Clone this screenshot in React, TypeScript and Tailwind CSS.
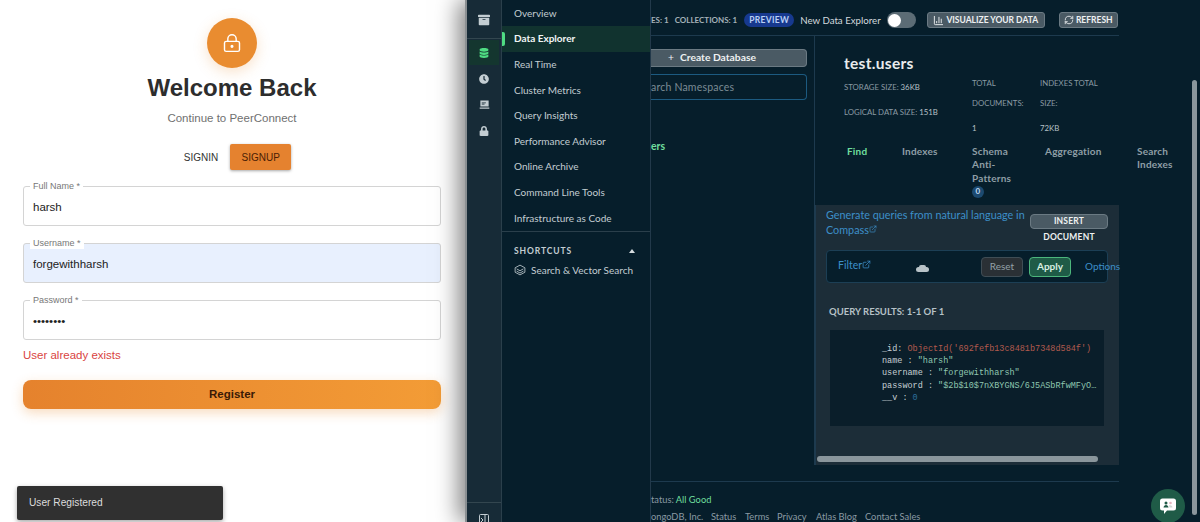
import { FaArchive, FaClock, FaDatabase, FaLock } from 'react-icons/fa';
import { BarChart3, ExternalLink, LockKeyhole, RefreshCw } from 'lucide-react';

const menuItems = [
  'Overview',
  'Data Explorer',
  'Real Time',
  'Cluster Metrics',
  'Query Insights',
  'Performance Advisor',
  'Online Archive',
  'Command Line Tools',
  'Infrastructure as Code',
];

function Field({
  label,
  value,
  filled = false,
}: {
  label: string;
  value: string;
  filled?: boolean;
}): React.ReactElement {
  return (
    <div
      className={`relative flex items-center h-[40px] px-[9px] pt-[3px] rounded-[3px] border border-[#d4d4d4] ${
        filled ? 'bg-[#e8f0fe]' : 'bg-white'
      }`}
    >
      <span className="absolute left-[6px] -top-[7px] px-[3px] bg-white text-[9px] leading-[12px] text-[#777]">
        {label} *
      </span>
      <span className="text-[11.5px] text-[#222]">{value}</span>
    </div>
  );
}

function LoginPanel(): React.ReactElement {
  return (
    <div className="flex flex-col w-[465px] h-[522px] shrink-0 bg-white pl-[23px] pr-[24px] pt-[18px] font-['Liberation_Sans',sans-serif]">
      <div className="flex flex-col items-center">
        <div className="flex items-center justify-center w-[50px] h-[50px] rounded-full bg-[#e98c30] shadow-[0_4px_14px_rgba(233,140,48,0.25)]">
          <LockKeyhole size={20} strokeWidth={1.7} className="text-white" />
        </div>
        <h1 className="mt-[5px] text-[24px] leading-[30px] font-bold text-[#2d2d2d]">Welcome Back</h1>
        <p className="mt-[7px] text-[11.5px] leading-[16px] text-[#707070]">Continue to PeerConnect</p>
        <div className="flex items-center mt-[18px] ml-[11px]">
          <span className="text-[10px] text-[#333] mr-[12px]">SIGNIN</span>
          <span className="flex items-center justify-center w-[61px] h-[26px] rounded-[2px] bg-[#e5822f] text-[10px] text-[#4a1d05] shadow-[0_1px_3px_rgba(0,0,0,0.35)]">
            SIGNUP
          </span>
        </div>
      </div>
      <div className="flex flex-col gap-[17px] mt-[16px]">
        <Field label="Full Name" value="harsh" />
        <Field label="Username" value="forgewithharsh" filled />
        <Field label="Password" value="••••••••" />
      </div>
      <p className="mt-[7px] text-[11.5px] leading-[16px] text-[#d9443f]">User already exists</p>
      <button className="mt-[17px] h-[29px] pt-px rounded-[8px] bg-gradient-to-r from-[#e5822d] to-[#f39c36] text-[11.5px] font-bold text-[#3a1a06] shadow-[0_4px_12px_rgba(233,140,48,0.3)]">
        Register
      </button>
      <div className="flex items-center ml-[-6px] mt-[77px] w-[206px] h-[34px] pl-[12px] rounded-[2px] bg-[#303030] text-[10.2px] text-[#ddd] shadow-[0_2px_5px_rgba(0,0,0,0.35)]">
        User Registered
      </div>
    </div>
  );
}

function Rail(): React.ReactElement {
  return (
    <div className="flex flex-col w-[35px] shrink-0 h-full bg-[#172b37] border-r border-[#2a3f4b]">
      <div className="flex items-center justify-center h-[39px] pt-[2px] border-b border-[#33464f] text-[#c3cdd2]">
        <FaArchive size={12} />
      </div>
      <div className="flex items-center justify-center mx-[2px] mt-[1px] h-[25px] bg-[#14362f] text-[#4fdc83]">
        <FaDatabase size={10} />
      </div>
      <div className="flex items-center justify-center h-[26px] mt-[1px] text-[#c3cdd2]">
        <FaClock size={10} />
      </div>
      <div className="flex items-center justify-center h-[25.5px] text-[#c3cdd2]">
        <svg width="11" height="11" viewBox="0 0 16 16" fill="currentColor">
          <path d="M2 2h12v9H2zM1 12.500h14V14H1zM4 5h6v1H4zM4 7h4v1H4z" fillRule="evenodd" />
        </svg>
      </div>
      <div className="flex items-center justify-center h-[26px] text-[#c3cdd2]">
        <FaLock size={10} />
      </div>
      <div className="mt-auto flex justify-center h-[20px] pt-[11px] border-t border-[#33464f] text-[#c3cdd2]">
        <svg width="10" height="12" viewBox="0 0 10 12" fill="none" stroke="currentColor" strokeWidth="1">
          <rect x="0.5" y="0.5" width="9" height="11" rx="1" />
          <path d="M6 1v10M2 4l2 2-2 2" />
        </svg>
      </div>
    </div>
  );
}

function SideMenu(): React.ReactElement {
  return (
    <div className="flex flex-col w-[149px] shrink-0 h-full bg-[#061e2b] border-r border-[#22394a] pt-[0.5px]">
      {menuItems.map((item) =>
        item === 'Data Explorer' ? (
          <div
            key={item}
            className="relative flex items-center h-[25.6px] pl-[12px] bg-[#11332f] text-[10px] font-bold text-[#f1f5f5]"
          >
            <span className="absolute left-0 top-[6px] w-[3px] h-[14px] rounded-r-[2px] bg-[#4fdc83]" />
            {item}
          </div>
        ) : (
          <div key={item} className="flex items-center h-[25.6px] pl-[12px] text-[10px] text-[#c3cdd2]">
            {item}
          </div>
        ),
      )}
      <div className="mt-[0.5px] border-t border-[#2a3f4b] pt-[13px] pl-[12px] pr-[15px]">
        <div className="flex items-center justify-between">
          <span className="text-[8.5px] leading-[12px] font-bold tracking-[0.9px] text-[#c3cdd2]">SHORTCUTS</span>
          <span className="w-0 h-0 border-x-[3px] border-b-[4px] border-x-transparent border-b-[#d5dcdf]" />
        </div>
        <div className="flex items-center gap-[5px] mt-[6px] text-[10px] leading-[14px] text-[#c3cdd2]">
          <svg width="12" height="12" viewBox="0 0 16 16" fill="none" stroke="currentColor" strokeWidth="1.1" className="shrink-0">
            <path d="M8 1.500l6.500 3.500v6L8 14.500 1.500 11V5z" />
            <path d="M3.500 6.500L8 9l4.500-2.500M3.500 9.500L8 12l4.500-2.500" />
          </svg>
          <span className="whitespace-nowrap">Search &amp; Vector Search</span>
        </div>
      </div>
    </div>
  );
}

function TopBar(): React.ReactElement {
  return (
    <div className="flex items-center w-[468px] h-[36px] shrink-0 pt-[5px] border-b border-[#1d3a4e] text-[#c3cdd2] whitespace-nowrap">
      <span className="text-[8px] font-bold text-[#a5b2b9]">ES: 1</span>
      <span className="ml-[6px] text-[8px] font-bold text-[#a5b2b9]">COLLECTIONS: 1</span>
      <span className="ml-[7px] flex items-center justify-center w-[50px] h-[14px] shrink-0 rounded-full bg-[#17398e] text-[8.5px] font-bold tracking-[0.3px] text-[#b9d0f5]">
        PREVIEW
      </span>
      <span className="ml-[6px] text-[9.7px] text-[#d3dade]">New Data Explorer</span>
      <span className="ml-[6px] flex items-center w-[29px] h-[16px] shrink-0 pl-[1px] rounded-full bg-[#5c6c75]">
        <span className="w-[13px] h-[13px] rounded-full bg-white" />
      </span>
      <span className="ml-[11px] flex items-center justify-center gap-[2px] w-[118px] h-[16px] shrink-0 rounded-[3px] border border-[#6b7a83] bg-[#4a5a64] text-[8.5px] font-bold text-[#eef1f2]">
        <BarChart3 size={11} />
        VISUALIZE YOUR DATA
      </span>
      <span className="ml-[14px] flex items-center justify-center gap-[2px] w-[59px] h-[16px] shrink-0 rounded-[3px] border border-[#6b7a83] bg-[#4a5a64] text-[8.5px] font-bold text-[#eef1f2]">
        <RefreshCw size={10} />
        REFRESH
      </span>
    </div>
  );
}

function Namespaces(): React.ReactElement {
  return (
    <div className="flex flex-col w-[164px] shrink-0 h-[429px] pr-[7px] border-r border-[#1d3a4e] overflow-hidden whitespace-nowrap">
      <div className="flex items-center h-[18px] mt-[13px] pl-[17px] gap-[6px] rounded-r-[4px] border border-l-0 border-[#6b7a83] bg-[#4a5a64] text-[10.3px] font-bold text-[#eef1f2]">
        <span className="font-normal">+</span> Create Database
      </div>
      <div className="flex items-center h-[26px] mt-[7px] pt-[1px] rounded-r-[4px] border border-l-0 border-[#1c5a80] text-[10.5px] tracking-[0.2px] text-[#7c8c95]">
        arch Namespaces
      </div>
      <span className="mt-[39px] text-[10.5px] leading-[14px] font-bold text-[#6fdf9e]">ers</span>
    </div>
  );
}

function DetailHeader(): React.ReactElement {
  return (
    <div className="h-[169px] shrink-0 bg-[#061e2b] whitespace-nowrap">
      <div className="flex pl-[29px] pt-[17px] text-[7.8px] text-[#8a9aa3]">
        <div className="w-[128px] shrink-0">
          <div className="text-[15.5px] leading-[20px] font-bold tracking-[0.3px] text-[#e8eced]">test.users</div>
          <div className="mt-[8px] leading-[12px]">
            STORAGE SIZE: <span className="text-[#b6c1c7]">36KB</span>
          </div>
          <div className="mt-[13px] leading-[12px]">
            LOGICAL DATA SIZE: <span className="text-[#b6c1c7]">151B</span>
          </div>
        </div>
        <div className="w-[68px] shrink-0 pt-[20px] leading-[20px]">
          <div>TOTAL</div>
          <div>DOCUMENTS:</div>
          <div className="mt-[5px] text-[#b6c1c7]">1</div>
        </div>
        <div className="pt-[20px] leading-[20px]">
          <div>INDEXES TOTAL</div>
          <div>SIZE:</div>
          <div className="mt-[5px] text-[#b6c1c7]">72KB</div>
        </div>
      </div>
      <div className="flex mt-[7px] pl-[32px] text-[10px] leading-[13.3px] font-bold tracking-[0.2px] text-[#8f9ea6]">
        <span className="w-[55px] shrink-0 text-[#6fdf9e]">Find</span>
        <span className="w-[70px] shrink-0">Indexes</span>
        <div className="w-[73px] shrink-0 whitespace-normal pr-[20px]">
          Schema Anti-Patterns
          <span className="flex items-center justify-center w-[12px] h-[12px] rounded-full bg-[#1c4a70] text-[8px] text-[#c3dcf0] mt-px">
            0
          </span>
        </div>
        <span className="w-[92px] shrink-0">Aggregation</span>
        <div className="w-[40px] shrink-0 whitespace-normal">Search Indexes</div>
      </div>
    </div>
  );
}

function QueryPanel(): React.ReactElement {
  return (
    <div className="relative flex flex-col h-[260px] w-[304px] bg-[#1c2d38] border-l border-[#1d3a4e]">
      <div className="flex items-start pl-[10px] pt-[3px]">
        <span className="w-[204px] text-[10.8px] leading-[14.5px] text-[#3d8fc9] shrink-0">
          Generate queries from natural language in Compass
          <ExternalLink size={8} className="inline mb-[4px]" />
        </span>
        <div className="flex flex-col items-center w-[78px] mt-[6px] shrink-0 whitespace-nowrap text-[8.5px] font-bold tracking-[0.2px] text-[#eef1f2]">
          <span className="flex items-center justify-center w-full h-[15px] rounded-[4px] border border-[#6b7a83] bg-[#4a5a64]">
            INSERT
          </span>
          <span className="mt-[2px] leading-[12px]">DOCUMENT</span>
        </div>
      </div>
      <div className="flex items-center ml-[10px] mt-[7px] w-[282px] h-[33px] shrink-0 rounded-[4px] border border-[#1c3f55] bg-[#061e2b] whitespace-nowrap">
        <span className="ml-[11px] -mt-px w-[77px] shrink-0 text-[10.5px] text-[#3d8fc9]">
          Filter
          <ExternalLink size={9} className="inline mb-[4px]" />
        </span>
        <span className="flex flex-col items-center w-[14px] shrink-0 mt-[3px]">
          <span className="w-[7px] h-[2px] rounded-t-[2px] bg-[#b8c3c8]" />
          <span className="w-[13px] h-[5px] rounded-[3px] bg-[#b8c3c8]" />
        </span>
        <span className="flex items-center justify-center ml-[52px] w-[42px] h-[20px] shrink-0 rounded-[4px] border border-[#3f4d55] bg-[#2a3035] text-[10px] text-[#93a0a7]">
          Reset
        </span>
        <span className="flex items-center justify-center ml-[6px] w-[42px] h-[20px] shrink-0 rounded-[4px] border border-[#4cb67c] bg-[#1f5b47] text-[10px] font-bold text-[#d7efe1]">
          Apply
        </span>
        <span className="ml-[14px] shrink-0 text-[10px] text-[#3d8fc9]">Options</span>
      </div>
      <div className="mt-[22px] ml-[13px] text-[9.5px] leading-[14px] font-bold text-[#b6c1c7] whitespace-nowrap">
        QUERY RESULTS: 1-1 OF 1
      </div>
      <div className="ml-[14px] mt-[11px] w-[274px] h-[96px] pl-[52px] pt-[13px] bg-[#0a1e2a] font-['Liberation_Mono',monospace] text-[8.5px] leading-[12.2px] whitespace-nowrap text-[#c7d0d5]">
        <div>
          _id: <span className="text-[#b25a4d]">ObjectId('692fefb13c8481b7348d584f')</span>
        </div>
        <div>
          name : <span className="text-[#8fc7b0]">"harsh"</span>
        </div>
        <div>
          username : <span className="text-[#8fc7b0]">"forgewithharsh"</span>
        </div>
        <div>
          password : <span className="text-[#8fc7b0]">"$2b$10$7nXBYGNS/6J5ASbRfwMFyO…</span>
        </div>
        <div>
          __v : <span className="text-[#2d6f9e]">0</span>
        </div>
      </div>
      <div className="mt-auto mb-[3px] ml-px w-[281px] h-[6px] rounded-full bg-[#8a969c]" />
    </div>
  );
}

function Footer(): React.ReactElement {
  return (
    <div className="w-[468px] h-[41px] border-t border-[#1d3a4e] pt-[12px] text-[9.3px] leading-[12px] text-[#8a9aa3] whitespace-nowrap">
      <div>
        tatus: <span className="text-[#6fdf9e]">All Good</span>
      </div>
      <div className="flex mt-[5px]">
        <span className="w-[60px]">ongoDB, Inc.</span>
        <span className="w-[34px]">Status</span>
        <span className="w-[32px]">Terms</span>
        <span className="w-[39px]">Privacy</span>
        <span className="w-[49px]">Atlas Blog</span>
        <span>Contact Sales</span>
      </div>
    </div>
  );
}

function MongoWindow(): React.ReactElement {
  return (
    <div className="relative flex flex-1 h-[522px] bg-[#061e2b] border-l-2 border-[#8a8f92] shadow-[-6px_0_22px_rgba(0,0,0,0.5)] overflow-hidden font-['Lato',sans-serif]">
      <Rail />
      <SideMenu />
      <div className="flex flex-col flex-1 min-w-0">
        <TopBar />
        <div className="flex h-[445px] shrink-0">
          <Namespaces />
          <div className="flex flex-col w-[304px] shrink-0">
            <DetailHeader />
            <QueryPanel />
          </div>
        </div>
        <Footer />
      </div>
      <div className="absolute right-[3px] top-[80px] w-[5px] h-[435px] rounded-full bg-[#8a969c]" />
      <div className="absolute right-[15px] -bottom-px flex items-center justify-center w-[34px] h-[34px] rounded-full bg-[#1f5b47]">
        <svg width="18" height="18" viewBox="0 0 18 18">
          <path d="M3.500 1.500h11a2.500 2.500 0 0 1 2.500 2.500v7a2.500 2.500 0 0 1-2.500 2.500H8l-3 3.500v-3.500H3.500A2.500 2.500 0 0 1 1 11V4a2.500 2.500 0 0 1 2.500-2.500z" fill="#fff" />
          <circle cx="7" cy="6" r="1.500" fill="#1f5b47" />
          <path d="M4.500 10.500c.2-1.500 1.200-2.500 2.500-2.500s2.300 1 2.500 2.500z" fill="#1f5b47" />
          <circle cx="11.500" cy="6" r="1.300" fill="#e2b7c0" />
          <path d="M10 8.500c1.500-.8 3.300 0 3.500 2h-3z" fill="#cfd8d4" />
        </svg>
      </div>
    </div>
  );
}

export default function App(): React.ReactElement {
  return (
    <div className="flex w-[1200px] h-[522px] overflow-hidden bg-white">
      <LoginPanel />
      <MongoWindow />
    </div>
  );
}
